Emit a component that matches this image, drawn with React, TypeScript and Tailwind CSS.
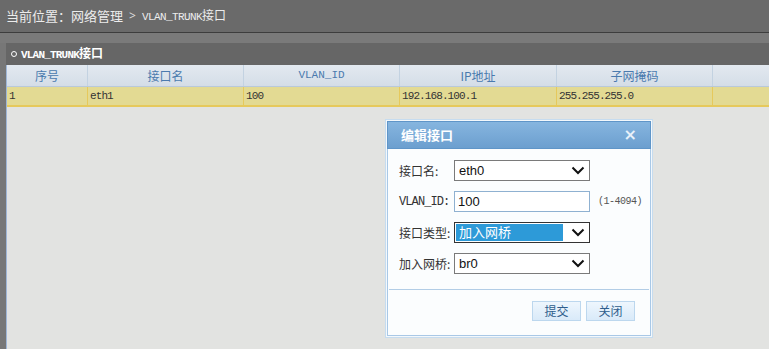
import React from "react";

const cols = [
  { title: "序号", w: "w-[81px]", value: "1" },
  { title: "接口名", w: "w-[156px]", value: "eth1" },
  { title: "VLAN_ID", w: "w-[156px]", value: "100" },
  { title: "IP地址", w: "w-[157px]", value: "192.168.100.1" },
  { title: "子网掩码", w: "w-[156px]", value: "255.255.255.0" },
  { title: "操作", w: "w-[156px]", value: "" },
];

const cjk = "font-['SimSun','Noto_Sans_CJK_SC',sans-serif]";
const mono = "font-['Liberation_Mono','Noto_Sans_CJK_SC',monospace]";

const Chevron: React.FC = () => (
  <svg width="14" height="9" viewBox="0 0 14 9" className="shrink-0">
    <path d="M1.5 1.5 L7 7 L12.5 1.5" fill="none" stroke="#111" strokeWidth="2" />
  </svg>
);

const SelectBox: React.FC<{ value: string; active?: boolean }> = ({ value, active }) => (
  <div
    className={`flex items-center w-[136px] h-[21px] border ${
      active ? "border-[#333]" : "border-[#7a7a7a]"
    } bg-white pl-[1px] pr-[4px]`}
  >
    <div
      className={`flex-1 h-[17px] flex items-center pl-[3px] text-[13px] font-['Liberation_Sans','Noto_Sans_CJK_SC',sans-serif] ${
        active ? "bg-[#2d9ad8] text-white" : "text-[#111]"
      }`}
    >
      {value}
    </div>
    <div className="w-[22px] flex justify-end">
      <Chevron />
    </div>
  </div>
);

const FormRow: React.FC<{ label: string; labelClass?: string; children: React.ReactNode }> = ({
  label,
  labelClass,
  children,
}) => (
  <div className="flex items-center h-[21px]">
    <div className={`w-[55px] shrink-0 whitespace-nowrap text-[12px] text-[#333] ${labelClass ?? cjk}`}>
      {label}
    </div>
    {children}
  </div>
);

const App: React.FC = () => {
  return (
    <div className="relative w-[769px] h-[349px] overflow-hidden bg-[#777777] flex flex-col">
      {/* breadcrumb */}
      <div className="h-[33px] shrink-0 bg-[#6a6a6a] border-b border-[#3d3d3d] flex items-center pl-[6px] gap-[6px] text-[#ececec]">
        <span className={`text-[13px] ${cjk}`}>当前位置：网络管理</span>
        <span className="text-[12px] text-[#dcdcdc]">&gt;</span>
        <span className={`text-[11px] ${mono} tracking-[-0.6px]`}>
          VLAN_TRUNK<span className={`text-[12px] ${cjk} tracking-normal`}>接口</span>
        </span>
      </div>
      <div className="h-[10px] shrink-0 bg-[#7a7a7a]" />

      {/* panel */}
      <div className="flex-1 ml-[6px] flex flex-col min-h-0">
        <div className="h-[22px] shrink-0 bg-[#666666] flex items-center pl-[5px] gap-[4px] text-white">
          <span className="w-[6px] h-[6px] rounded-full border-[1.5px] border-white" />
          <span className={`text-[11px] font-bold ${mono} tracking-[-0.8px]`}>
            VLAN_TRUNK<span className={`text-[12px] ${cjk} tracking-normal`}>接口</span>
          </span>
        </div>
        <div className="flex-1 flex flex-col bg-[#e2e3e1] border-l border-[#9fb6d6] min-h-0">
          <div className="flex h-[22px] shrink-0 bg-gradient-to-b from-[#e3e9f0] to-[#d4dde7] border-b border-[#b9c9da]">
            {cols.map((c, i) => (
              <div
                key={i}
                className={`${c.w} shrink-0 flex items-center justify-center border-r border-[#c3d2e1] text-[#4a7aae] ${
                  c.title === "VLAN_ID" ? `text-[11px] ${mono}` : `text-[12px] ${cjk}`
                }`}
              >
                {c.title}
              </div>
            ))}
          </div>
          <div className="flex h-[20px] shrink-0 bg-[#e3da93] border-b-2 border-[#e6c95c]">
            {cols.map((c, i) => (
              <div
                key={i}
                className={`${c.w} shrink-0 flex items-center pl-[2px] border-r border-[#e6c95c] text-[11px] text-[#333] ${mono} tracking-[-0.9px]`}
              >
                {c.value}
              </div>
            ))}
          </div>
        </div>
      </div>

      {/* dialog */}
      <div className="absolute left-[385px] top-[119px] w-[268px] h-[219px] border border-[#c6dcef] bg-[#f3f8fc] p-[1px] flex flex-col">
        <div className="h-[28px] shrink-0 bg-gradient-to-b from-[#86b5df] to-[#6c9fcf] border border-[#5f95c8] flex items-center justify-between px-[13px]">
          <span className={`text-[13px] font-bold text-white ${cjk}`}>编辑接口</span>
          <span className="text-[16px] font-bold text-[#e8f1fa] font-['DejaVu_Sans',sans-serif] leading-none">×</span>
        </div>
        <div className="flex-1 bg-[#fbfdfe] border border-[#a9c8e6] border-t-0 flex flex-col">
          <div className="flex flex-col gap-[10px] pl-[11px] pt-[11px]">
            <FormRow label="接口名:">
              <SelectBox value="eth0" />
            </FormRow>
            <FormRow label="VLAN_ID:" labelClass={`${mono} tracking-[-0.9px]`}>
              <div className="w-[136px] h-[21px] border border-[#8fb1d1] bg-white flex items-center pl-[3px] text-[13px] text-[#111] font-['Liberation_Sans',sans-serif]">
                100
              </div>
              <span className={`ml-[8px] text-[10px] text-[#555] ${mono} tracking-[-0.5px]`}>(1-4094)</span>
            </FormRow>
            <FormRow label="接口类型:">
              <SelectBox value="加入网桥" active />
            </FormRow>
            <FormRow label="加入网桥:">
              <SelectBox value="br0" />
            </FormRow>
          </div>
          <div className="mt-[15px] mx-[1px] border-t border-[#b2cde6]" />
          <div className="flex justify-end gap-[5px] pr-[15px] pt-[11px]">
            {["提交", "关闭"].map((b) => (
              <div
                key={b}
                className={`w-[49px] h-[20px] flex items-center justify-center border border-[#bcd7ee] bg-gradient-to-b from-[#eef6fd] to-[#d9eaf9] text-[12px] text-[#2e5d8c] ${cjk}`}
              >
                {b}
              </div>
            ))}
          </div>
        </div>
      </div>
    </div>
  );
};

export default App;
